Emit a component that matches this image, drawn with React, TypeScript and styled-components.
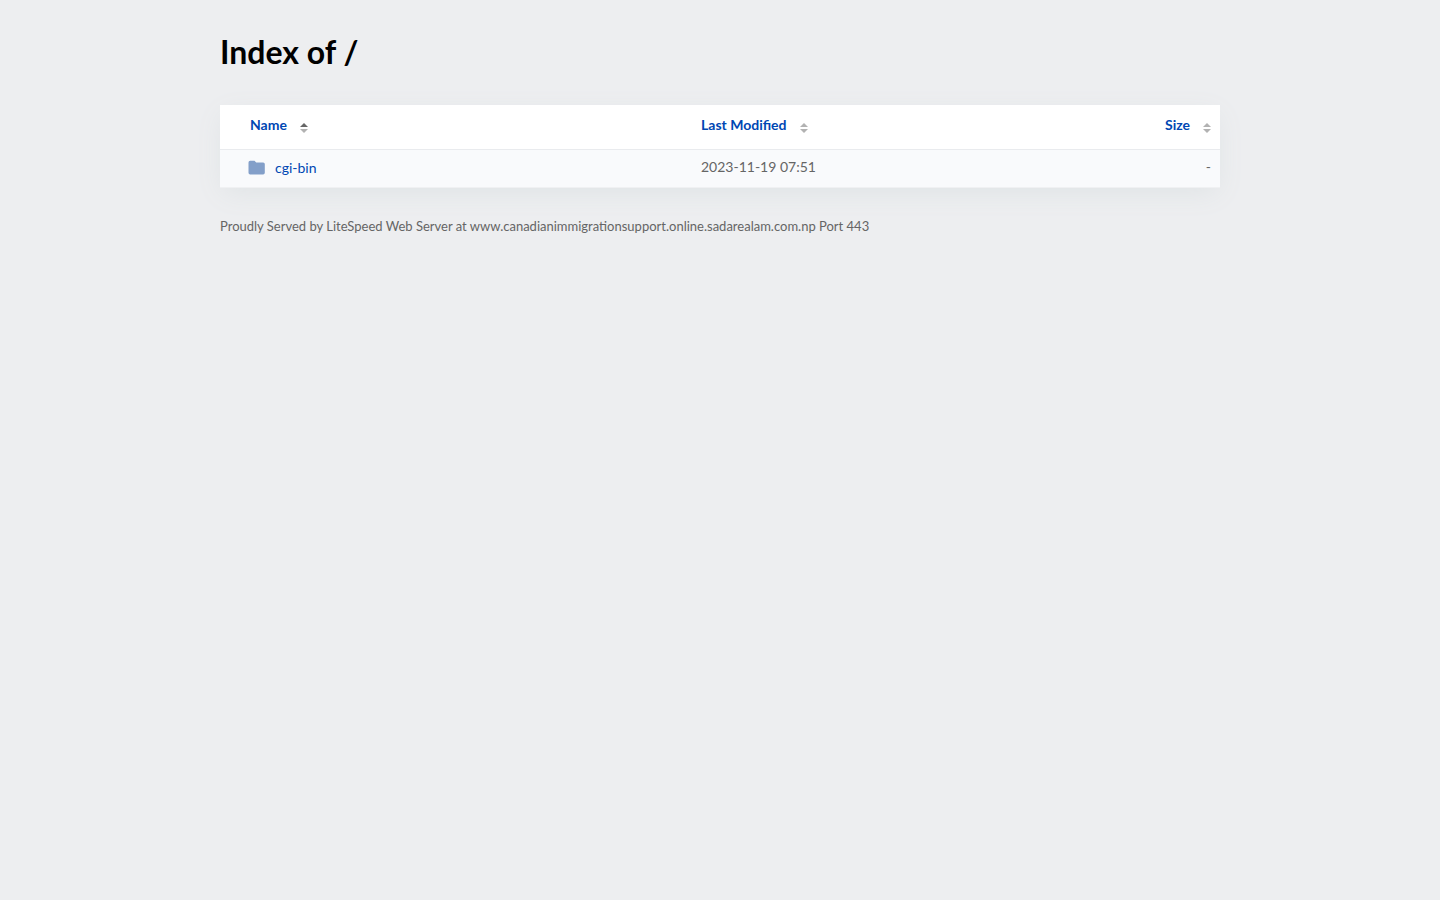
import React from "react";
import styled, { createGlobalStyle } from "styled-components";

const Global = createGlobalStyle`
  body {
    margin: 0;
    background: #edeef0;
    color: #000;
    font-family: Lato, "Liberation Sans", sans-serif;
    font-size: 14px;
    line-height: 20px;
  }
`;

const Container = styled.main`
  max-width: 1000px;
  margin: 0 auto;
  padding: 32px 20px;
`;

const Title = styled.h1`
  margin: 0 0 33px;
  font-size: 32px;
  line-height: 40px;
  font-weight: 700;
`;

const Listing = styled.table`
  width: 100%;
  border-collapse: separate;
  border-spacing: 0;
  table-layout: fixed;
  background: #fff;
  box-shadow: 0 7px 25px -3px #dfe3e5;
`;

const NameCol = styled.col`
  width: 47%;
`;

const HeadCell = styled.th<{ $end?: boolean; $first?: boolean }>`
  height: 45px;
  box-sizing: border-box;
  padding: 0 9px 4px ${(p) => (p.$first ? "30px" : "11px")};
  border-bottom: 1px solid #e9ebee;
  text-align: ${(p) => (p.$end ? "right" : "left")};
`;

const SortLink = styled.a`
  display: inline-flex;
  align-items: center;
  gap: 13px;
  color: #0047b3;
  font-weight: 700;
  text-decoration: none;
`;

const SortIcon = styled.svg`
  display: block;
  margin-top: 6px;
`;

const Cell = styled.td<{ $end?: boolean; $first?: boolean }>`
  height: 38px;
  box-sizing: border-box;
  padding: ${(p) => (p.$first ? "0 9px 2px 28px" : "0 9px 4px 11px")};
  border-bottom: 1px solid #f0f1f3;
  background: #f9fafc;
  color: #656565;
  text-align: ${(p) => (p.$end ? "right" : "left")};
`;

const FileLink = styled.a`
  display: flex;
  align-items: center;
  gap: 10px;
  color: #0047b3;
  text-decoration: none;
`;

const Footer = styled.footer`
  margin-top: 28px;
  color: #656565;
  font-size: 13px;
  line-height: 20px;
`;

const Sort = ({ active }: { active?: boolean }) => (
  <SortIcon width="8" height="10" viewBox="0 0 8 10" aria-hidden="true">
    <path d="M0 4L4 0l4 4z" fill={active ? "#666" : "#b2b2b2"} />
    <path d="M0 6l4 4 4-4z" fill="#b2b2b2" />
  </SortIcon>
);

export default function App() {
  return (
    <>
      <Global />
      <Container>
        <Title>Index of /</Title>
        <Listing>
          <colgroup>
            <NameCol />
            <col />
            <col />
          </colgroup>
          <thead>
            <tr>
              <HeadCell $first aria-sort="ascending">
                <SortLink href="#name">Name<Sort active /></SortLink>
              </HeadCell>
              <HeadCell>
                <SortLink href="#modified">Last Modified<Sort /></SortLink>
              </HeadCell>
              <HeadCell $end>
                <SortLink href="#size">Size<Sort /></SortLink>
              </HeadCell>
            </tr>
          </thead>
          <tbody>
            <tr>
              <Cell $first>
                <FileLink href="#cgi-bin">
                  <svg width="17" height="16" viewBox="0 0 17 16" aria-hidden="true">
                    <path d="M2.2.7h4.3l1.7 1.7h6.9a1.7 1.7 0 0 1 1.7 1.7v8.6a1.7 1.7 0 0 1-1.7 1.7H2.2a1.7 1.7 0 0 1-1.7-1.7V2.4A1.7 1.7 0 0 1 2.2.7z" fill="#839fc9" />
                  </svg>
                  cgi-bin
                </FileLink>
              </Cell>
              <Cell>2023-11-19 07:51</Cell>
              <Cell $end>-</Cell>
            </tr>
          </tbody>
        </Listing>
        <Footer>
          Proudly Served by LiteSpeed Web Server at www.canadianimmigrationsupport.online.sadarealam.com.np Port 443
        </Footer>
      </Container>
    </>
  );
}
